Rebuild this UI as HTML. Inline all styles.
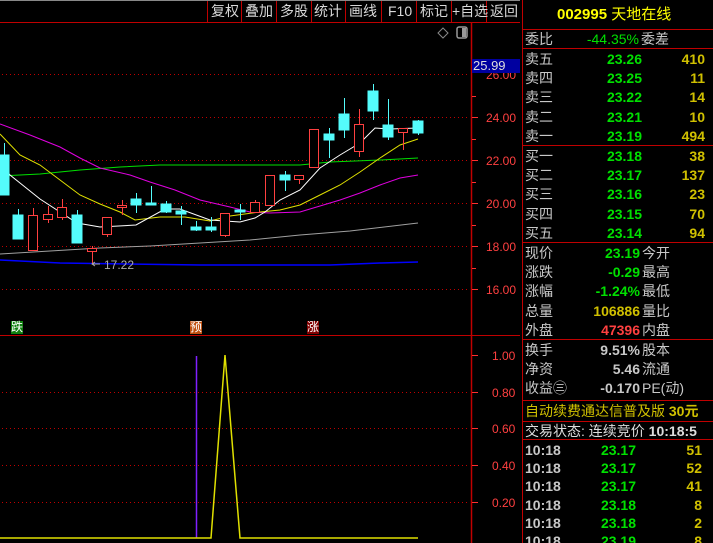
<!DOCTYPE html><html><head><meta charset="utf-8"><style>
html,body{margin:0;width:713px;height:543px;background:#000;overflow:hidden;position:relative;font-family:"Liberation Sans","Noto Sans CJK SC",sans-serif}
.t{position:absolute;white-space:nowrap;font-size:14px;line-height:16px}
.w{color:#c8c8c8}.g{color:#00e000}.y{color:#d0c000}.r{color:#ff4040}
.btn{position:absolute;top:3px;color:#d8d8d8;font-size:14px;line-height:16px}
</style></head><body>
<svg width="713" height="543" style="position:absolute;left:0;top:0">
<line x1="0" y1="0.5" x2="520" y2="0.5" stroke="#888"/>
<line x1="0" y1="22.5" x2="520" y2="22.5" stroke="#c00000"/>
<g stroke="#c00000">
<line x1="207.5" y1="1" x2="207.5" y2="22"/><line x1="241.5" y1="1" x2="241.5" y2="22"/><line x1="276.5" y1="1" x2="276.5" y2="22"/><line x1="311.5" y1="1" x2="311.5" y2="22"/><line x1="345.5" y1="1" x2="345.5" y2="22"/><line x1="381.5" y1="1" x2="381.5" y2="22"/><line x1="416.5" y1="1" x2="416.5" y2="22"/><line x1="451.5" y1="1" x2="451.5" y2="22"/><line x1="486.5" y1="1" x2="486.5" y2="22"/>
</g>
<line x1="471.5" y1="22" x2="471.5" y2="543" stroke="#c00000" stroke-width="1.5"/>
<line x1="0" y1="335.5" x2="520" y2="335.5" stroke="#c00000"/>
<line x1="522.5" y1="0" x2="522.5" y2="543" stroke="#c00000"/>
<g stroke="#c00000" stroke-dasharray="1,3">
<line x1="2" y1="74.5" x2="470" y2="74.5"/><line x1="2" y1="117.5" x2="470" y2="117.5"/><line x1="2" y1="160.5" x2="470" y2="160.5"/><line x1="2" y1="203.5" x2="470" y2="203.5"/><line x1="2" y1="246.5" x2="470" y2="246.5"/><line x1="2" y1="289.5" x2="470" y2="289.5"/>
<line x1="2" y1="392.5" x2="470" y2="392.5"/><line x1="2" y1="428.5" x2="470" y2="428.5"/><line x1="2" y1="465.5" x2="470" y2="465.5"/><line x1="2" y1="502.5" x2="470" y2="502.5"/>
</g>
<g stroke="#ff3030">
<line x1="472" y1="96.5" x2="476" y2="96.5"/><line x1="472" y1="117.5" x2="478" y2="117.5"/><line x1="472" y1="139.5" x2="476" y2="139.5"/><line x1="472" y1="160.5" x2="478" y2="160.5"/><line x1="472" y1="182.5" x2="476" y2="182.5"/><line x1="472" y1="203.5" x2="478" y2="203.5"/><line x1="472" y1="225.5" x2="476" y2="225.5"/><line x1="472" y1="246.5" x2="478" y2="246.5"/><line x1="472" y1="268.5" x2="476" y2="268.5"/><line x1="472" y1="289.5" x2="478" y2="289.5"/>
<line x1="472" y1="355.5" x2="478" y2="355.5"/><line x1="472" y1="392.5" x2="478" y2="392.5"/><line x1="472" y1="428.5" x2="478" y2="428.5"/><line x1="472" y1="465.5" x2="478" y2="465.5"/><line x1="472" y1="502.5" x2="478" y2="502.5"/>
</g>
<path d="M443 28 L448 33 L443 38 L438 33Z" fill="none" stroke="#888"/>
<rect x="457" y="27" width="10" height="11" rx="2" fill="none" stroke="#999" stroke-width="1.5"/><rect x="462" y="28" width="4" height="9" fill="#999"/>
<g fill="none" stroke-width="1">
<polyline stroke="#a0a0a0" points="0,254 50,251 100,248 150,246 200,243 250,240 300,235 350,231 418,223"/>
<polyline stroke="#0000ff" stroke-width="1.5" points="0,260 60,263 200,265 330,265 380,263 418,262"/>
<polyline stroke="#00e000" points="0,176 40,174 80,170 120,167 160,165 230,165 300,165 330,162 380,160 418,158"/>
<polyline stroke="#e000e0" points="0,124 30,135 60,147 80,158 100,168 130,175 150,182 175,190 200,200 230,207 250,212 270,213 300,212 320,206 340,200 360,193 380,185 400,178 418,175"/>
<polyline stroke="#e0e000" points="0,134 20,155 40,165 60,180 80,195 100,204 120,212 135,220 160,217 185,217 210,221 230,216 260,212 280,210 300,205 320,195 340,185 360,172 380,158 400,145 418,139"/>
<polyline stroke="#ffffff" points="0,163 10,175 20,183 40,199 77,223 100,227 136,225 165,209 180,209 210,220 240,222 255,218 265,212 280,200 300,190 320,168 340,155 360,143 375,128 390,129 418,128"/>
</g>
<g stroke-width="1">
<g stroke="#54fcfc" fill="#54fcfc">
<line x1="4.5" y1="143" x2="4.5" y2="155"/><rect x="0" y="155" width="9" height="40"/>
<line x1="18.5" y1="209" x2="18.5" y2="215"/><rect x="13" y="215" width="10" height="24"/>
<line x1="77.5" y1="210" x2="77.5" y2="215"/><rect x="72" y="215" width="10" height="28"/>
<line x1="136.5" y1="193" x2="136.5" y2="213"/><rect x="131" y="199" width="10" height="6"/>
<line x1="151.5" y1="186" x2="151.5" y2="205"/><rect x="146" y="203" width="10" height="2"/>
<line x1="166.5" y1="201" x2="166.5" y2="213"/><rect x="161" y="204" width="10" height="8"/>
<line x1="181.5" y1="206" x2="181.5" y2="225"/><rect x="176" y="211" width="10" height="3"/>
<line x1="196.5" y1="221" x2="196.5" y2="231"/><rect x="191" y="227" width="10" height="3"/>
<line x1="211.5" y1="217" x2="211.5" y2="232"/><rect x="206" y="227" width="10" height="3"/>
<line x1="240.5" y1="204" x2="240.5" y2="220"/><rect x="235" y="210" width="10" height="2"/>
<line x1="285.5" y1="171" x2="285.5" y2="191"/><rect x="280" y="175" width="10" height="5"/>
<line x1="329.5" y1="128" x2="329.5" y2="158"/><rect x="324" y="134" width="10" height="6"/>
<line x1="344.5" y1="98" x2="344.5" y2="138"/><rect x="339" y="114" width="10" height="16"/>
<line x1="373.5" y1="84" x2="373.5" y2="120"/><rect x="368" y="91" width="10" height="20"/>
<line x1="388.5" y1="99" x2="388.5" y2="140"/><rect x="383" y="125" width="10" height="12"/>
<line x1="418.5" y1="120" x2="418.5" y2="135"/><rect x="413" y="121" width="10" height="12"/>
</g>
<g stroke="#ff4040" fill="#000">
<line x1="33.5" y1="208" x2="33.5" y2="215"/><rect x="28.5" y="215.5" width="9" height="35"/>
<line x1="48.5" y1="206" x2="48.5" y2="223"/><rect x="43.5" y="214.5" width="9" height="5"/>
<line x1="62.5" y1="199" x2="62.5" y2="220"/><rect x="57.5" y="207.5" width="9" height="10"/>
<line x1="92.5" y1="246" x2="92.5" y2="264"/><rect x="87.5" y="248.5" width="9" height="3"/>
<line x1="107.5" y1="234" x2="107.5" y2="237"/><rect x="102.5" y="217.5" width="9" height="17"/>
<line x1="122.5" y1="200" x2="122.5" y2="215"/><rect x="117.5" y="205.5" width="9" height="2"/>
<line x1="225.5" y1="235" x2="225.5" y2="237"/><rect x="220.5" y="213.5" width="9" height="22"/>
<line x1="255.5" y1="200" x2="255.5" y2="202"/><rect x="250.5" y="202.5" width="9" height="10"/>
<rect x="265.5" y="175.5" width="9" height="30"/>
<line x1="299.5" y1="179" x2="299.5" y2="184"/><rect x="294.5" y="175.5" width="9" height="4"/>
<rect x="309.5" y="129.5" width="9" height="38"/>
<line x1="359.5" y1="109" x2="359.5" y2="157"/><rect x="354.5" y="124.5" width="9" height="27"/>
<line x1="403.5" y1="132" x2="403.5" y2="150"/><rect x="398.5" y="128.5" width="9" height="4"/>
</g>
</g>
<path d="M95 262 L92 264 L95 266 M92 264 L100 264" stroke="#aaa" fill="none"/>
<line x1="196.5" y1="356" x2="196.5" y2="538" stroke="#8020ff" stroke-width="1.5"/>
<polyline fill="none" stroke="#e0e000" stroke-width="1.5" points="0,538 211,538 225,355 240,538 418,538"/>
<g stroke="#c00000">
<line x1="522" y1="29.5" x2="713" y2="29.5"/><line x1="522" y1="48.5" x2="713" y2="48.5"/><line x1="522" y1="145.5" x2="713" y2="145.5"/><line x1="522" y1="242.5" x2="713" y2="242.5"/><line x1="522" y1="339.5" x2="713" y2="339.5"/><line x1="522" y1="400.5" x2="713" y2="400.5"/><line x1="522" y1="421.5" x2="713" y2="421.5"/><line x1="522" y1="439.5" x2="713" y2="439.5"/>
</g>
</svg>
<div class="btn" style="left:211px">复权</div><div class="btn" style="left:245px">叠加</div><div class="btn" style="left:280px">多股</div><div class="btn" style="left:314px">统计</div><div class="btn" style="left:349px">画线</div><div class="btn" style="left:388px">F10</div><div class="btn" style="left:420px">标记</div><div class="btn" style="left:452px">+自选</div><div class="btn" style="left:490px">返回</div>
<div class="t r" style="left:486px;top:67px;font-size:12px">26.00</div>
<div style="position:absolute;left:472px;top:59px;width:48px;height:14px;background:#0000a0"></div>
<div class="t" style="left:473px;top:58px;color:#ddd;font-size:13px">25.99</div>
<div class="t r" style="left:486px;top:110px;font-size:12px">24.00</div>
<div class="t r" style="left:486px;top:153px;font-size:12px">22.00</div>
<div class="t r" style="left:486px;top:196px;font-size:12px">20.00</div>
<div class="t r" style="left:486px;top:239px;font-size:12px">18.00</div>
<div class="t r" style="left:486px;top:282px;font-size:12px">16.00</div>
<div class="t r" style="left:492px;top:348px;font-size:12px">1.00</div>
<div class="t r" style="left:492px;top:385px;font-size:12px">0.80</div>
<div class="t r" style="left:492px;top:421px;font-size:12px">0.60</div>
<div class="t r" style="left:492px;top:458px;font-size:12px">0.40</div>
<div class="t r" style="left:492px;top:495px;font-size:12px">0.20</div>
<div class="t" style="left:104px;top:257px;color:#aaa;font-size:12px">17.22</div>
<div class="t" style="left:11px;top:321px;background:#108010;color:#fff;font-size:12px;line-height:13px">跌</div>
<div class="t" style="left:190px;top:321px;background:#c05010;color:#fff;font-size:12px;line-height:13px">预</div>
<div class="t" style="left:307px;top:321px;background:#800000;color:#fff;font-size:12px;line-height:13px">涨</div>
<div class="t" style="left:557px;top:7px;font-size:15px;color:#ffff00"><b>002995</b> 天地在线</div>
<div class="t w" style="left:525px;top:31px">委比</div><div class="t g" style="left:540px;top:31px;width:99px;text-align:right">-44.35%</div><div class="t w" style="left:641px;top:31px">委差</div>
<div style="position:absolute;left:525px;top:50px;width:180px;font-size:14px;line-height:19.2px">
<div style="position:relative;height:96px" class="w">卖五<br>卖四<br>卖三<br>卖二<br>卖一
<div class="g" style="position:absolute;left:0;top:0;width:117px;text-align:right;font-weight:bold">23.26<br>23.25<br>23.22<br>23.21<br>23.19</div>
<div class="y" style="position:absolute;left:0;top:0;width:180px;text-align:right;font-weight:bold">410<br>11<br>14<br>10<br>494</div></div>
<div style="position:relative;height:96px;margin-top:1px" class="w">买一<br>买二<br>买三<br>买四<br>买五
<div class="g" style="position:absolute;left:0;top:0;width:117px;text-align:right;font-weight:bold">23.18<br>23.17<br>23.16<br>23.15<br>23.14</div>
<div class="y" style="position:absolute;left:0;top:0;width:180px;text-align:right;font-weight:bold">38<br>137<br>23<br>70<br>94</div></div>
<div style="position:relative;height:96px;margin-top:1px" class="w">现价<br>涨跌<br>涨幅<br>总量<br>外盘
<div style="position:absolute;left:0;top:0;width:115px;text-align:right;font-weight:bold"><span class="g">23.19</span><br><span class="g">-0.29</span><br><span class="g">-1.24%</span><br><span class="y">106886</span><br><span class="r">47396</span></div>
<div style="position:absolute;left:117px;top:0">今开<br>最高<br>最低<br>量比<br>内盘</div></div>
<div style="position:relative;height:60px;margin-top:1px" class="w">换手<br>净资<br>收益㊂
<div style="position:absolute;left:0;top:0;width:115px;text-align:right;font-weight:bold">9.51%<br>5.46<br>-0.170</div>
<div style="position:absolute;left:117px;top:0">股本<br>流通<br>PE(动)</div></div>
</div>
<div class="t y" style="left:525px;top:403px">自动续费通达信普及版 <b>30元</b></div>
<div class="t w" style="left:525px;top:423px;color:#ddd">交易状态: 连续竞价 <b>10:18:5</b></div>
<div style="position:absolute;left:525px;top:441px;width:180px;font-size:14px;line-height:18.2px;font-weight:bold">
<div class="w">10:18<br>10:18<br>10:18<br>10:18<br>10:18<br>10:18</div>
<div class="g" style="position:absolute;left:0;top:0;width:111px;text-align:right">23.17<br>23.17<br>23.17<br>23.18<br>23.18<br>23.19</div>
<div class="y" style="position:absolute;left:0;top:0;width:177px;text-align:right">51<br>52<br>41<br>8<br>2<br>8</div>
</div>
</body></html>
